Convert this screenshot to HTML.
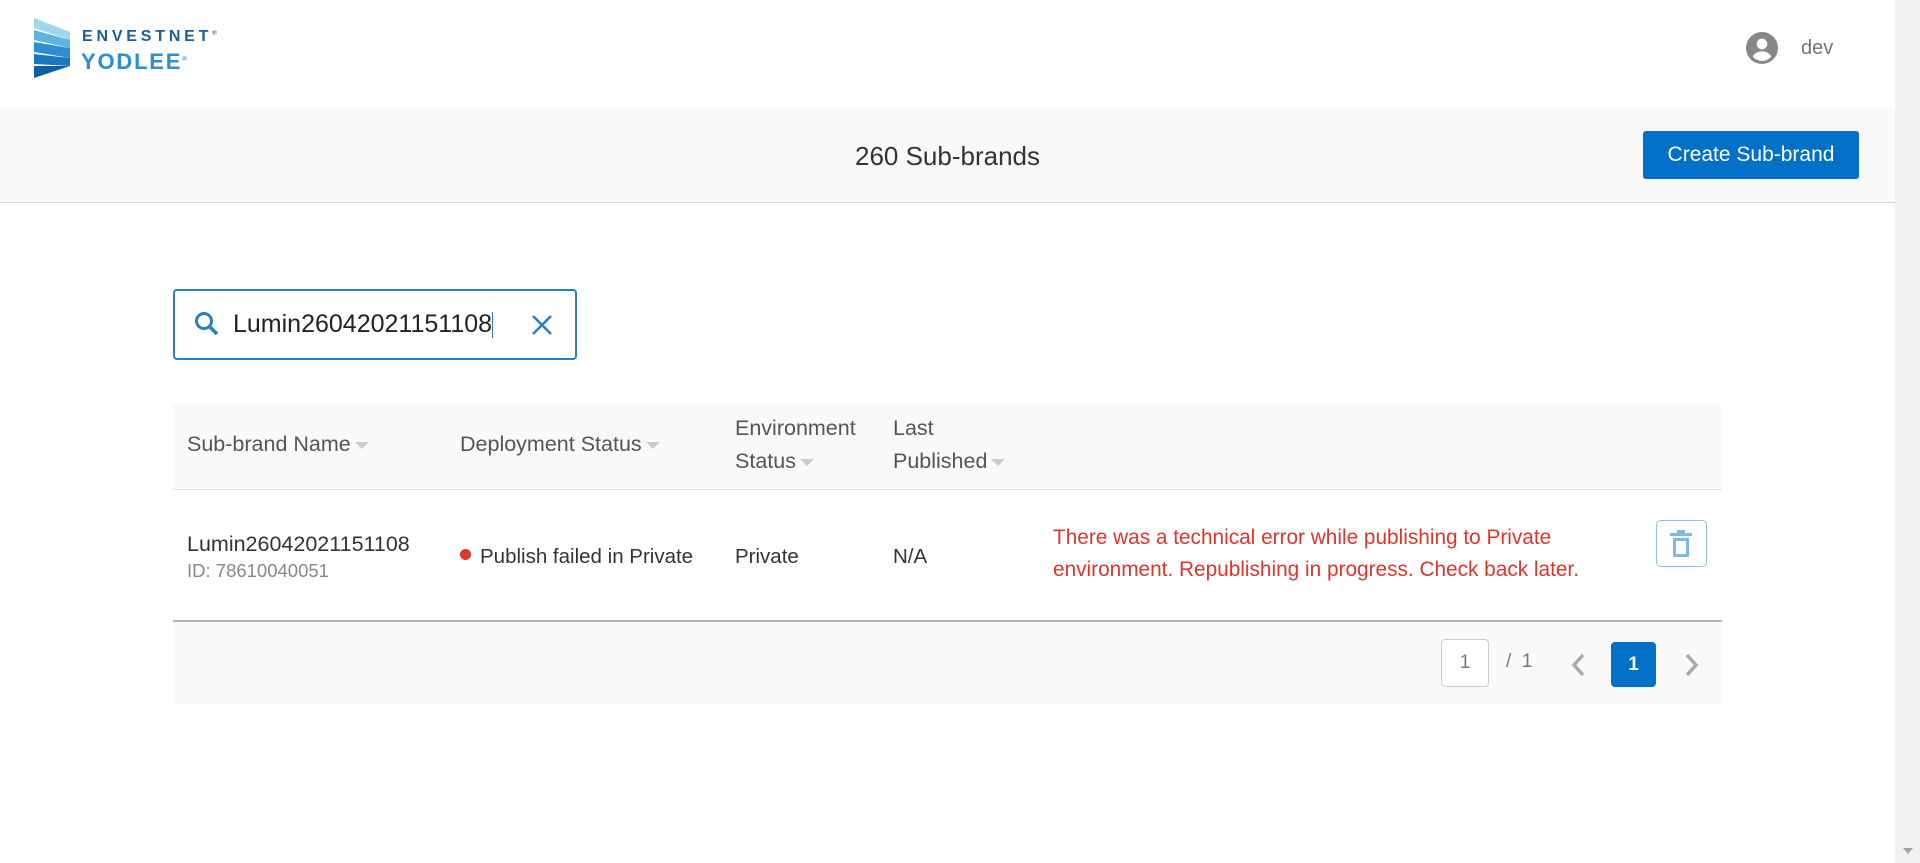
<!DOCTYPE html>
<html><head><meta charset="utf-8"><style>
*{box-sizing:border-box;margin:0;padding:0}
body{width:1920px;height:863px;overflow:hidden;background:#fff;font-family:"Liberation Sans",sans-serif;position:relative;color:#333}
.a{position:absolute}
.scroll{left:1895px;top:0;width:25px;height:863px;background:#f1f1f1}
.band{left:0;top:108px;width:1895px;height:95px;background:#f9f9f9;border-bottom:1px solid #d6d6d6}
.th{color:#555;font-size:21.5px;line-height:33px}
.car{display:inline-block;width:0;height:0;border-left:7px solid transparent;border-right:7px solid transparent;border-top:7px solid #ccc;vertical-align:middle;margin-left:4px}
.td{font-size:20.5px;color:#333}
</style></head><body>
<div class="a scroll"><div class="a" style="left:8px;top:848px;border-left:5px solid transparent;border-right:5px solid transparent;border-top:6px solid #a3a3a3"></div></div>
<svg class="a" style="left:34px;top:18px" width="42" height="60" viewBox="0 0 42 60">
<polygon points="0,0 36,14 36,22 0,10" fill="#9fd6ea"/>
<polygon points="0,12 36,22 36,30 0,22" fill="#5fb3df"/>
<polygon points="0,24 36,30 36,40 0,34" fill="#2d8fd0"/>
<polygon points="0,36 36,40 36,48 0,46" fill="#1a78c0"/>
<polygon points="0,48 36,48 0,60" fill="#0f5fa6"/>
</svg>
<div class="a" style="left:82px;top:28px;font-size:16px;font-weight:bold;letter-spacing:3.8px;color:#1a5e9a">ENVESTNET<sup style="font-size:6px">®</sup></div>
<div class="a" style="left:81px;top:49px;font-size:22px;font-weight:bold;letter-spacing:1.8px;color:#2a8fd4">YODLEE<sup style="font-size:6px">®</sup></div>
<svg class="a" style="left:1746px;top:32px" width="32" height="32" viewBox="0 0 24 24"><circle cx="12" cy="12" r="12" fill="#888"/><circle cx="12" cy="9" r="4" fill="#fff"/><path d="M5 18.5c1.5-2.8 4-4 7-4s5.5 1.2 7 4c-1.8 2-4.3 3.2-7 3.2s-5.2-1.2-7-3.2z" fill="#fff"/></svg>
<div class="a" style="left:1801px;top:37px;font-size:20px;color:#777">dev</div>
<div class="a band"></div>
<div class="a" style="left:0;width:1895px;top:141px;text-align:center;font-size:26px;color:#333">260 Sub-brands</div>
<div class="a" style="left:1643px;top:131px;width:216px;height:48px;background:#0070c9;border-radius:3px;color:#fff;font-size:21px;line-height:48px;text-align:center">Create Sub-brand</div>
<div class="a" style="left:173px;top:289px;width:404px;height:71px;border:2px solid #2b7fc3;border-radius:4px"></div>
<svg class="a" style="left:194px;top:311px" width="26" height="26" viewBox="0 0 26 26"><circle cx="10" cy="10" r="7.5" fill="none" stroke="#2b7fc3" stroke-width="3"/><path d="M15.5 15.5L23 23" stroke="#2b7fc3" stroke-width="3.5"/></svg>
<div class="a" style="left:233px;top:310px;font-size:25px;color:#222">Lumin26042021151108<span style="display:inline-block;width:1px;height:26px;background:#2b7fc3;vertical-align:middle"></span></div>
<svg class="a" style="left:530px;top:313px" width="24" height="24" viewBox="0 0 24 24"><path d="M3 3L21 21M21 3L3 21" stroke="#2b7fc3" stroke-width="2.6"/></svg>
<div class="a" style="left:173px;top:405px;width:1549px;height:85px;background:#f9f9f9;border-bottom:1px solid #e3e3e3"></div>
<div class="a th" style="left:187px;top:428px">Sub-brand Name<span class="car"></span></div>
<div class="a th" style="left:460px;top:428px">Deployment Status<span class="car"></span></div>
<div class="a th" style="left:735px;top:412px">Environment<br>Status<span class="car"></span></div>
<div class="a th" style="left:893px;top:412px">Last<br>Published<span class="car"></span></div>
<div class="a" style="left:187px;top:532px;font-size:21.5px;color:#333">Lumin26042021151108</div>
<div class="a" style="left:187px;top:560px;font-size:18.5px;color:#888">ID: 78610040051</div>
<div class="a" style="left:460px;top:549px;width:11px;height:11px;border-radius:50%;background:#e0352b"></div>
<div class="a td" style="left:480px;top:545px">Publish failed in Private</div>
<div class="a td" style="left:735px;top:545px">Private</div>
<div class="a td" style="left:893px;top:545px">N/A</div>
<div class="a" style="left:1053px;top:522px;font-size:20.8px;line-height:32px;color:#e0352b">There was a technical error while publishing to Private<br>environment. Republishing in progress. Check back later.</div>
<div class="a" style="left:1656px;top:520px;width:51px;height:47px;border:1px solid #8ec0e8;border-radius:5px"></div>
<svg class="a" style="left:1670px;top:530px" width="22" height="28" viewBox="0 0 22 28"><rect x="0" y="3" width="22" height="3" fill="#7fb7e6"/><rect x="7" y="0" width="8" height="3" fill="#7fb7e6"/><path d="M3 8h16v19H3z M6 11v13h10V11z" fill="#7fb7e6" fill-rule="evenodd"/></svg>
<div class="a" style="left:173px;top:620px;width:1549px;height:84px;background:#f9f9f9;border-top:2px solid #b5b5b5"></div>
<div class="a" style="left:1441px;top:639px;width:48px;height:48px;border:1px solid #ccc;border-radius:4px;background:#fff;text-align:center;line-height:46px;font-size:19px;color:#777">1</div>
<div class="a" style="left:1506px;top:651px;font-size:19px;color:#777">/&nbsp;&nbsp;1</div>
<svg class="a" style="left:1568px;top:652px" width="20" height="26" viewBox="0 0 20 26"><path d="M15 3L6 13l9 10" fill="none" stroke="#aaa" stroke-width="3.5"/></svg>
<div class="a" style="left:1611px;top:642px;width:45px;height:45px;background:#0070c9;border-radius:4px;color:#fff;text-align:center;line-height:45px;font-size:19px;font-weight:bold">1</div>
<svg class="a" style="left:1682px;top:652px" width="20" height="26" viewBox="0 0 20 26"><path d="M5 3l9 10-9 10" fill="none" stroke="#aaa" stroke-width="3.5"/></svg>
</body></html>
